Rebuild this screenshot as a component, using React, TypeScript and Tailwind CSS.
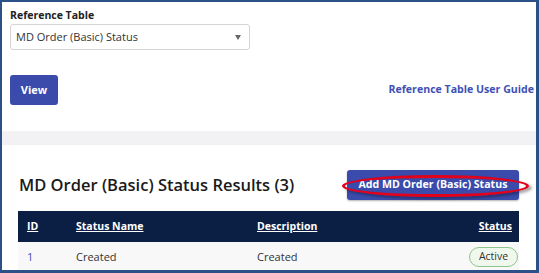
export default function App() {
  const rows = [{ id: 1, name: "Created", description: "Created", status: "Active" }];

  return (
    <div className="w-[539px] h-[273px] overflow-hidden bg-white border-l-2 border-t-2 border-r-[3px] border-b-[3px] border-[#2a5288] font-['Open_Sans',sans-serif]">
      {/* filter panel */}
      <div className="pl-[8px] pr-[2px] pt-[6px]">
        <div className="text-[10.5px] leading-[15px] font-bold text-[#222]">Reference Table</div>
        <div className="mt-[1px] w-[240px] h-[26px] rounded-[3px] border border-[#d4d4d4] flex items-center justify-between pl-[5px] pr-[8px] text-[11px] text-[#333]">
          <span>MD Order (Basic) Status</span>
          <span className="w-0 h-0 border-l-[3px] border-r-[3px] border-t-[5px] border-l-transparent border-r-transparent border-t-[#666]" />
        </div>
        <div className="mt-[25px] flex items-center justify-between">
          <button className="w-[48px] h-[30px] rounded-[3px] bg-[#3a4bab] text-white text-[11px] font-bold">
            View
          </button>
          <a className="text-[10.6px] font-bold text-[#3f51b5] mr-[0px]">Reference Table User Guide</a>
        </div>
      </div>

      <div className="mt-[26px] h-[14px] bg-[#f2f2f5]" />

      {/* results */}
      <div className="pl-[16px] pr-[17px] pt-[25px]">
        <div className="flex items-center justify-between">
          <h2 className="ml-[1px] text-[16.5px] font-semibold text-[#1a1a1a]">MD Order (Basic) Status Results (3)</h2>
          <div className="relative">
            <button className="w-[172px] h-[30px] rounded-[3px] bg-[#3a4bab] text-white text-[10.6px] font-bold shadow-[0_1px_2px_rgba(0,0,0,0.3)]">
              Add MD Order (Basic) Status
            </button>
            <div className="absolute left-[-5px] top-[5px] w-[187px] h-[22px] rounded-[50%] border-[3px] border-[#e3001b] shadow-[3px_2px_3px_rgba(0,0,0,0.35)] pointer-events-none" />
          </div>
        </div>

        <div className="mt-[11px] text-[10.5px]">
          <div className="h-[31px] bg-[#0b1f45] flex items-center text-white font-bold underline">
            <div className="w-[58px] pl-[9px]">ID</div>
            <div className="w-[181px]">Status Name</div>
            <div className="flex-1">Description</div>
            <div className="pr-[7px]">Status</div>
          </div>
          {rows.map((r) => (
            <div key={r.id} className="h-[30px] bg-[#f8f8f8] flex items-center text-[#333] text-[11px]">
              <div className="w-[58px] pl-[9px] text-[#3f51b5]">{r.id}</div>
              <div className="w-[181px]">{r.name}</div>
              <div className="flex-1">{r.description}</div>
              <div className="pr-[1px]">
                <span className="inline-flex items-center justify-center w-[49px] h-[20px] rounded-full border border-[#8dc58a] bg-[#f0f8ee] text-[10.5px] text-[#333]">
                  {r.status}
                </span>
              </div>
            </div>
          ))}
        </div>
      </div>
    </div>
  );
}
